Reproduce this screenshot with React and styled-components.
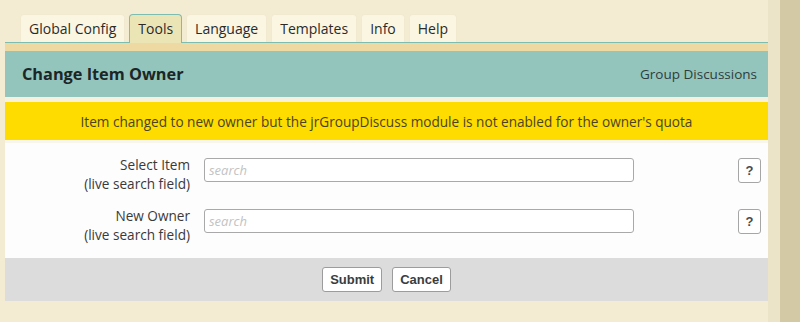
import React from 'react';
import styled, { createGlobalStyle } from 'styled-components';

/**
 * Styles
 */

const Global = createGlobalStyle`
  html, body {
    margin: 0;
    padding: 0;
    background: #f3ecd3;
    font-family: "Open Sans", "Liberation Sans", sans-serif;
  }
`;

const Page = styled.div`
  display: flex;
  height: 322px;
  overflow: hidden;
`;

const Main = styled.div`
  width: 763px;
  margin-left: 5px;
  display: flex;
  flex-direction: column;
`;

const Gutter = styled.div`
  width: 12px;
  background: #ece4c8;
`;

const Side = styled.div`
  flex: 1;
  background: #d3c9a4;
`;

const TabBar = styled.div`
  display: flex;
  gap: 4px;
  padding: 14px 0 0 15px;
  border-bottom: 1px solid #7dbcb1;
`;

const Tab = styled.div`
  height: 27px;
  padding: 0 8px;
  display: flex;
  align-items: center;
  font-size: 14px;
  color: #2b2b2b;
  background: ${p => (p.active ? '#ebe5b6' : '#fbf6e2')};
  border: 1px solid ${p => (p.active ? '#7dbcb1' : '#f1ead0')};
  border-bottom: none;
  border-radius: 4px 4px 0 0;
  margin-bottom: ${p => (p.active ? '-1px' : '0')};
  padding-bottom: ${p => (p.active ? '1px' : '0')};
`;

const Band = styled.div`
  height: 8px;
  background: #efd9a3;
`;

const Header = styled.div`
  height: 46px;
  background: #94c5bd;
  display: flex;
  align-items: center;
  justify-content: space-between;
  padding: 0 11px 0 17px;
`;

const Title = styled.h2`
  margin: 0;
  font-size: 16.3px;
  font-weight: 700;
  color: #1b2626;
`;

const Module = styled.span`
  font-size: 13.5px;
  color: #2e3d3c;
`;

const Gap = styled.div`
  height: ${p => p.h}px;
  background: ${p => p.bg};
`;

const Notice = styled.div`
  height: 38px;
  background: #fedc00;
  display: flex;
  align-items: center;
  justify-content: center;
  font-size: 13.6px;
  color: #4a4420;
`;

const Form = styled.div`
  background: #fdfdfd;
  padding: 12px 0 14px;
  display: flex;
  flex-direction: column;
  gap: 13px;
`;

const Row = styled.div`
  display: grid;
  grid-template-columns: 185px 430px 1fr 23px;
  column-gap: 14px;
  align-items: start;
  padding-right: 7px;
`;

const Label = styled.div`
  text-align: right;
  font-size: 13.6px;
  line-height: 19px;
  color: #3a3a3a;
`;

const Input = styled.input`
  box-sizing: border-box;
  height: 24px;
  width: 100%;
  margin-top: 3px;
  border: 1px solid #a9a9a9;
  border-radius: 3px;
  padding: 0 4px;
  font-family: "Open Sans", "Liberation Sans", sans-serif;
  font-size: 13px;
  font-style: italic;
  background: #fff;
  outline: none;

  &::placeholder {
    color: #c3c3c3;
  }
`;

const Help = styled.button`
  grid-column: 4;
  box-sizing: border-box;
  width: 23px;
  height: 25px;
  margin-top: 3px;
  padding: 0;
  border: 1px solid #a6a6a6;
  border-radius: 3px;
  background: #fff;
  font-family: "Liberation Sans", Arial, sans-serif;
  font-weight: 700;
  font-size: 13px;
  color: #4a4a4a;
`;

const Footer = styled.div`
  height: 43px;
  background: #dcdcdc;
  display: flex;
  align-items: center;
  justify-content: center;
  gap: 10px;
`;

const Button = styled.button`
  box-sizing: border-box;
  height: 25px;
  padding: 0 7px;
  border: 1px solid #9c9c9c;
  border-radius: 3px;
  background: #fff;
  font-family: "Liberation Sans", Arial, sans-serif;
  font-weight: 700;
  font-size: 13px;
  color: #3c3c3c;
`;

/**
 * Component
 */

const tabs = ['Global Config', 'Tools', 'Language', 'Templates', 'Info', 'Help'];

const fields = ['Select Item', 'New Owner'];

export default function App() {
  return (
    <Page>
      <Global />
      <Main>
        <TabBar>
          {tabs.map(t => (
            <Tab key={t} active={t === 'Tools'}>{t}</Tab>
          ))}
        </TabBar>
        <Band />
        <Header>
          <Title>Change Item Owner</Title>
          <Module>Group Discussions</Module>
        </Header>
        <Gap h={5} bg="#f6f1de" />
        <Notice>
          Item changed to new owner but the jrGroupDiscuss module is not enabled for the owner's quota
        </Notice>
        <Gap h={3} bg="#f8f5ea" />
        <Form>
          {fields.map(f => (
            <Row key={f}>
              <Label>
                {f}
                <br />
                (live search field)
              </Label>
              <Input placeholder="search" />
              <Help>?</Help>
            </Row>
          ))}
        </Form>
        <Footer>
          <Button>Submit</Button>
          <Button>Cancel</Button>
        </Footer>
      </Main>
      <Gutter />
      <Side />
    </Page>
  );
}
